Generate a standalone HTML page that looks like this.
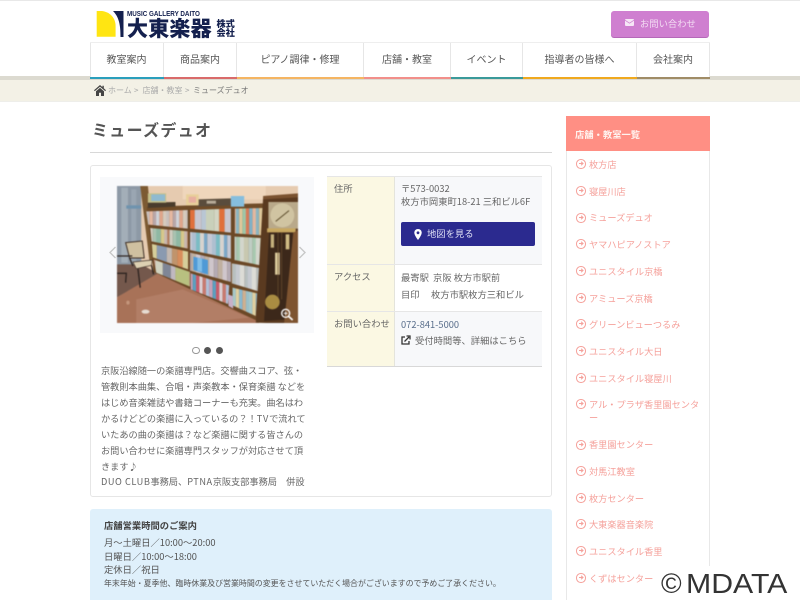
<!DOCTYPE html>
<html lang="ja"><head><meta charset="utf-8"><title>ミューズデュオ</title>
<style>
html,body{margin:0;padding:0;background:#fff}
#p{position:relative;width:800px;height:600px;overflow:hidden;background:#fff;font-family:"Noto Sans CJK JP","Liberation Sans",sans-serif;color:#555}
#p div{position:absolute}
.t{white-space:nowrap}
.nav{top:43px;height:34px;line-height:32px;text-align:center;font-size:10px;color:#555;background:#fff;border-right:1px solid #e6e6e6;box-sizing:border-box}
.st{top:77px;height:2px}
.line{left:101px;font-size:9.2px;line-height:16px;white-space:nowrap;color:#666}
.li{left:589px;font-size:9.2px;line-height:13px;white-space:nowrap;color:#f5a19b;margin-top:-.5px}
.ic{left:576px;width:7.5px;height:7.5px;border:1px solid #f5a19b;border-radius:50%}
.ic:after{content:"";position:absolute;left:1.5px;top:3.2px;width:4px;height:1px;background:#f5a19b}
.ic:before{content:"";position:absolute;left:2.8px;top:2.2px;width:2px;height:2px;border-top:1px solid #f5a19b;border-right:1px solid #f5a19b;transform:rotate(45deg)}
.v{font-size:9.3px;white-space:nowrap;color:#666;line-height:13px}
.l{left:334px;font-size:9.3px;white-space:nowrap;color:#666;line-height:13px}
.b{top:84px;font-size:8px;line-height:13px;color:#aaa;white-space:nowrap}
.w{letter-spacing:.55px}
</style></head><body><div id="p">
<div style="left:0;top:0;width:800px;height:1px;background:#e8e8e8"></div>

<!-- logo -->
<svg style="position:absolute;left:96px;top:10px" width="30" height="28" viewBox="0 0 30 28"><path d="M0.7 1H6C14 2 19.6 8 19.6 16V26.7H0.7Z" fill="#ffe512"/><path d="M17 1H27.5V27H24.5C24.600 15 23 7 17 1Z" fill="#14204e"/></svg>
<div class="t" style="left:127px;top:9.500px;font-family:'Liberation Sans',sans-serif;font-size:7.400px;font-weight:700;color:#14204e;line-height:8px;transform:scaleX(.85);transform-origin:0 50%">MUSIC GALLERY DAITO</div>
<div class="t" style="left:127px;top:16.500px;font-size:21px;font-weight:900;color:#14204e;line-height:23px;letter-spacing:.2px">大東楽器</div>
<div class="t" style="left:216.500px;top:18.500px;font-size:9.200px;font-weight:900;color:#14204e;line-height:9.500px">株式<br>会社</div>

<!-- contact button -->
<div style="left:611px;top:11px;width:98px;height:26px;background:#cf7fd0;border-radius:3px;box-shadow:0 1px 0 #b568b8"></div>
<svg style="position:absolute;left:625px;top:19px" width="9" height="7" viewBox="0 0 9 7"><rect width="9" height="7" rx="1" fill="#f6e6f6"/><path d="M0 1.200L4.500 4.200 9 1.200" stroke="#cf7fd0" stroke-width=".7" fill="none"/></svg>
<div class="t" style="left:640px;top:16.500px;font-size:9.300px;line-height:13px;color:#f3dcf3">お問い合わせ</div>

<!-- nav -->
<div style="left:0;top:76px;width:800px;height:4px;background:#dcdad0"></div>
<div style="left:90px;top:42px;width:620px;height:1px;background:#eee"></div>
<div style="left:90px;top:43px;width:1px;height:34px;background:#e6e6e6;z-index:2"></div>
<div class="nav" style="left:90px;width:74px">教室案内</div>
<div class="nav" style="left:164px;width:73px">商品案内</div>
<div class="nav" style="left:237px;width:127px">ピアノ調律・修理</div>
<div class="nav" style="left:364px;width:87px">店舗・教室</div>
<div class="nav" style="left:451px;width:72px">イベント</div>
<div class="nav" style="left:523px;width:114px">指導者の皆様へ</div>
<div class="nav" style="left:637px;width:73px">会社案内</div>
<div class="st" style="left:90px;width:74px;background:#2a9fbc"></div>
<div class="st" style="left:164px;width:73px;background:#d96a6a"></div>
<div class="st" style="left:237px;width:127px;background:#f5b562"></div>
<div class="st" style="left:364px;width:87px;background:#f28f8a"></div>
<div class="st" style="left:451px;width:72px;background:#3a9a9a"></div>
<div class="st" style="left:523px;width:114px;background:#f0a91e"></div>
<div class="st" style="left:637px;width:73px;background:#a08c66"></div>

<!-- breadcrumb -->
<div style="left:0;top:80px;width:800px;height:21px;background:#f3f1e6;border-bottom:1px solid #eeeeea"></div>
<svg style="position:absolute;left:94px;top:85px" width="12" height="11" viewBox="0 0 12 11"><path d="M6 0L0 5.200 .8 6.100 6 1.700 11.200 6.100 12 5.200 9.800 3.300V.8H8.400V2.100ZM2 6.300V11H5V7.800H7V11H10V6.300L6 2.900Z" fill="#444"/></svg>
<div class="b" style="left:108px">ホーム</div>
<div class="b" style="left:134px">&gt;</div>
<div class="b" style="left:142.500px">店舗・教室</div>
<div class="b" style="left:185px">&gt;</div>
<div class="b" style="left:193px;color:#777">ミューズデュオ</div>

<!-- title -->
<div class="t" style="left:92px;top:118px;font-size:16px;line-height:22px;font-weight:700;color:#555;letter-spacing:1.300px">ミューズデュオ</div>
<div style="left:90px;top:152px;width:462px;height:1px;background:#d8d8d8"></div>

<!-- card -->
<div style="left:90px;top:165px;width:460px;height:330px;border:1px solid #e6e6e6;border-radius:3px;background:#fff"></div>
<div style="left:100px;top:177px;width:214px;height:156px;background:#f8f9fb"></div>

<!-- photo -->
<svg style="position:absolute;left:116.700px;top:186px;filter:blur(.4px)" width="181.300" height="137" viewBox="2 0 546 411" preserveAspectRatio="none">
<defs>
<pattern id="a" width="60" height="10" patternUnits="userSpaceOnUse"><rect width="10" height="10" fill="#cfd2d8"/><rect x="10" width="10" height="10" fill="#e0a58a"/><rect x="20" width="10" height="10" fill="#d6cabc"/><rect x="30" width="10" height="10" fill="#c9c0bc"/><rect x="40" width="10" height="10" fill="#e7b8a0"/><rect x="50" width="10" height="10" fill="#b8a6a8"/></pattern>
<pattern id="b" width="90" height="10" patternUnits="userSpaceOnUse"><rect width="25" height="10" fill="#c9d0ba"/><rect x="25" width="15" height="10" fill="#d3d6c4"/><rect x="40" width="16" height="10" fill="#e0703c"/><rect x="56" width="20" height="10" fill="#c9c7d0"/><rect x="76" width="14" height="10" fill="#b9c6d4"/></pattern>
<pattern id="c" width="60" height="10" patternUnits="userSpaceOnUse"><rect width="10" height="10" fill="#8bb5c0"/><rect x="10" width="10" height="10" fill="#e0c89a"/><rect x="20" width="10" height="10" fill="#9ec7a8"/><rect x="30" width="10" height="10" fill="#d87a58"/><rect x="40" width="10" height="10" fill="#7fb2c8"/><rect x="50" width="10" height="10" fill="#e4b8a0"/></pattern>
<pattern id="d" width="60" height="10" patternUnits="userSpaceOnUse"><rect width="14" height="10" fill="#8fb8a4"/><rect x="14" width="10" height="10" fill="#d6c88a"/><rect x="24" width="10" height="10" fill="#c9b7ae"/><rect x="34" width="6" height="10" fill="#b47a5a"/><rect x="40" width="10" height="10" fill="#d0ccc0"/><rect x="50" width="10" height="10" fill="#a9c2b0"/></pattern>
<pattern id="e" width="60" height="10" patternUnits="userSpaceOnUse"><rect width="12" height="10" fill="#7cbcc4"/><rect x="12" width="12" height="10" fill="#d7d3ce"/><rect x="24" width="10" height="10" fill="#7ca8c8"/><rect x="34" width="14" height="10" fill="#c5c8d4"/><rect x="48" width="12" height="10" fill="#aebfd0"/></pattern>
<pattern id="f" width="48" height="10" patternUnits="userSpaceOnUse"><rect width="14" height="10" fill="#c8c8b0"/><rect x="14" width="12" height="10" fill="#bfcdc4"/><rect x="26" width="10" height="10" fill="#a8c9b0"/><rect x="36" width="12" height="10" fill="#d3d6cc"/></pattern>
<pattern id="g" width="100" height="10" patternUnits="userSpaceOnUse"><rect width="22" height="10" fill="#d6ce9a"/><rect x="22" width="30" height="10" fill="#8a9ab0"/><rect x="52" width="16" height="10" fill="#c3b8b0"/><rect x="68" width="16" height="10" fill="#c0946c"/><rect x="84" width="16" height="10" fill="#d88e5c"/></pattern>
<pattern id="h" width="40" height="10" patternUnits="userSpaceOnUse"><rect width="14" height="10" fill="#cfc6cc"/><rect x="14" width="12" height="10" fill="#b4aab4"/><rect x="26" width="14" height="10" fill="#c0b0a0"/></pattern>
<pattern id="i" width="36" height="10" patternUnits="userSpaceOnUse"><rect width="12" height="10" fill="#c6cad0"/><rect x="12" width="14" height="10" fill="#dcdcd6"/><rect x="26" width="10" height="10" fill="#b8c0c0"/></pattern>
<pattern id="j" width="118" height="10" patternUnits="userSpaceOnUse"><rect width="22" height="10" fill="#d0d2c0"/><rect x="22" width="24" height="10" fill="#7f8696"/><rect x="46" width="14" height="10" fill="#c0b8c0"/><rect x="60" width="42" height="10" fill="#b8c080"/><rect x="102" width="16" height="10" fill="#c8a090"/></pattern>
<pattern id="k" width="60" height="10" patternUnits="userSpaceOnUse"><rect width="10" height="10" fill="#c85a6a"/><rect x="10" width="10" height="10" fill="#dcd0d4"/><rect x="20" width="10" height="10" fill="#c87a70"/><rect x="30" width="10" height="10" fill="#b0c0d8"/><rect x="40" width="10" height="10" fill="#c7a0b8"/><rect x="50" width="10" height="10" fill="#5aa0c0"/></pattern>
<pattern id="l" width="50" height="10" patternUnits="userSpaceOnUse"><rect width="10" height="10" fill="#a8c8c8"/><rect x="10" width="10" height="10" fill="#e0d0a0"/><rect x="20" width="10" height="10" fill="#88b8d0"/><rect x="30" width="10" height="10" fill="#d0b090"/><rect x="40" width="10" height="10" fill="#9ac0c8"/></pattern>
</defs>
<rect x="0" y="0" width="552" height="414" fill="#e6cbb0"/>
<rect x="200" y="0" width="250" height="40" fill="#efd6bc"/>
<rect x="0" y="0" width="75" height="240" fill="#8d99a6"/>
<rect x="15" y="5" width="20" height="225" fill="#a3aeb8"/><rect x="45" y="10" width="15" height="220" fill="#9aa6b2"/><rect x="30" y="58" width="45" height="10" fill="#6f93ae"/>
<!-- floor -->
<polygon points="0,335 120,262 430,395 430,414 0,414" fill="#a87258"/>
<polygon points="60,340 200,310 400,395 200,414 60,414" fill="#b27e66"/>
<polygon points="0,235 75,235 125,262 0,335" fill="#74584c"/>
<!-- shelf body -->
<polygon points="72,0 95,0 118,225 100,225" fill="#7c5a32"/>
<polygon points="92,66 445,56 425,405 112,258" fill="#6b4826"/>
<polygon points="92,62 445,52 445,66 92,74" fill="#704c28"/>
<polygon points="95,50 178,48 178,62 95,66" fill="#4a3c2c"/>
<polygon points="245,40 345,37 345,58 245,62" fill="#5a4c3c"/><rect x="272" y="44" width="28" height="9" fill="#b7ab98"/>
<rect x="95" y="22" width="55" height="28" fill="#c4c08a"/><rect x="105" y="25" width="42" height="20" fill="#8fbad0"/>
<rect x="210" y="25" width="38" height="33" fill="#e8d09a"/><rect x="218" y="32" width="22" height="18" fill="#e8b0a0"/>
<rect x="345" y="30" width="40" height="32" fill="#86bede"/>
<!-- row 1 -->
<polygon points="90,76 215,72 215,128 96,116" fill="url(#a)"/>
<polygon points="222,72 345,68 345,140 222,128" fill="url(#b)"/>
<polygon points="357,68 442,66 440,148 357,142" fill="url(#c)"/>
<!-- row 2 -->
<polygon points="102,126 216,136 216,188 106,166" fill="url(#d)"/>
<polygon points="222,138 345,148 345,218 222,192" fill="url(#e)"/>
<polygon points="356,152 436,156 434,238 356,222" fill="url(#f)"/>
<!-- row 3 -->
<polygon points="107,174 216,197 216,250 110,214" fill="url(#g)"/>
<polygon points="222,200 345,228 345,288 222,254" fill="url(#h)"/>
<polygon points="232,212 276,222 276,266 232,252" fill="#4f9ad6"/>
<polygon points="244,215 258,218 258,258 244,254" fill="#7fbde6"/>
<polygon points="348,232 430,246 428,316 348,292" fill="url(#i)"/>
<!-- row 4 -->
<polygon points="113,221 222,258 222,302 120,260" fill="url(#j)"/>
<polygon points="224,262 340,298 336,354 224,310" fill="url(#k)"/>
<polygon points="350,305 424,322 420,390 350,358" fill="url(#l)"/>
<polygon points="336,325 350,330 352,368 338,360" fill="#c8b0c8"/>
<!-- clock -->
<polygon points="442,36 552,24 552,414 420,410" fill="#5a3a20"/>
<polygon points="442,30 548,22 548,34 442,40" fill="#7a5230"/>
<rect x="458" y="48" width="90" height="80" fill="#b9a98a"/>
<circle cx="500" cy="88" r="36" fill="#d0c4a2"/>
<path d="M480 106L520 74" stroke="#5a4a2a" stroke-width="3"/>
<rect x="454" y="127" width="86" height="12" fill="#c8a860"/>
<polygon points="460,140 532,140 520,400 445,405" fill="#3c281a"/>
<rect x="465" y="145" width="10" height="40" fill="#c4b07c"/><rect x="510" y="145" width="11" height="45" fill="#d0bc84"/>
<rect x="478" y="200" width="14" height="66" fill="#dccb9c"/>
<path d="M487 140V340M498 140V340" stroke="#6a5030" stroke-width="2"/>
<circle cx="470" cy="348" r="22" fill="#a98c42"/>
<polygon points="533,140 552,130 552,414 505,414" fill="#7e5430"/>
<!-- chair -->
<polygon points="28,170 78,165 84,216 40,216" fill="#cfc0a0" stroke="#3e2f26" stroke-width="3"/>
<polygon points="50,228 108,222 106,238 60,248" fill="#ddd0b2" stroke="#3e2f26" stroke-width="2"/>
<path d="M65 248L72 305M106 238L112 265M40 216L50 240M2 210H48M2 262H30L28 290" stroke="#2e2420" stroke-width="4" fill="none"/>
<ellipse cx="88" cy="377" rx="12" ry="6" fill="#e6dcd2"/>
<ellipse cx="35" cy="350" rx="5" ry="6" fill="#c4967c"/>
<!-- zoom icon -->
<circle cx="510" cy="382" r="12" fill="none" stroke="#fff" stroke-width="4"/><path d="M519 391L531 402" stroke="#fff" stroke-width="5"/><path d="M504 382H516M510 376V388" stroke="#fff" stroke-width="2.500"/>
</svg>
<svg style="position:absolute;left:109px;top:246px" width="8" height="13" viewBox="0 0 8 13"><path d="M6.500 1L1 6.500 6.500 12" fill="none" stroke="#c8c8c8" stroke-width="1.400"/></svg>
<svg style="position:absolute;left:298px;top:246px" width="8" height="13" viewBox="0 0 8 13"><path d="M1.500 1L7 6.500 1.500 12" fill="none" stroke="#c8c8c8" stroke-width="1.400"/></svg>
<div style="left:192px;top:346.500px;width:5.500px;height:5.500px;border:1px solid #999;border-radius:50%"></div>
<div style="left:204px;top:346.500px;width:7px;height:7px;background:#555;border-radius:50%"></div>
<div style="left:216px;top:346.500px;width:7px;height:7px;background:#555;border-radius:50%"></div>

<!-- description -->
<div class="line" style="top:361.500px">京阪沿線随一の楽譜専門店。交響曲スコア、弦・</div>
<div class="line" style="top:377.500px">管教則本曲集、合唱・声楽教本・保育楽譜 などを</div>
<div class="line" style="top:393.500px">はじめ音楽雑誌や書籍コーナーも充実。曲名はわ</div>
<div class="line" style="top:409.500px">かるけどどの楽譜に入っているの？！<span style="letter-spacing:.8px">TV</span>で流れて</div>
<div class="line" style="top:425.500px">いたあの曲の楽譜は？など楽譜に関する皆さんの</div>
<div class="line" style="top:441.500px">お問い合わせに楽譜専門スタッフが対応させて頂</div>
<div class="line" style="top:457.500px">きます♪</div>
<div class="line" style="top:473px"><span class="w">DUO CLUB</span>事務局、<span class="w">PTNA</span>京阪支部事務局　併設</div>

<!-- table -->
<div style="left:327px;top:176px;width:215px;height:191px;background:#fff;border-top:1px solid #e6e6e6;box-sizing:border-box"></div>
<div style="left:395px;top:177px;width:147px;height:87px;background:#f7f8fa"></div>
<div style="left:395px;top:311px;width:147px;height:56px;background:#f7f8fa"></div>
<div style="left:327px;top:177px;width:68px;height:190px;background:#fbf8e3;border-right:1px solid #e4e4dc;box-sizing:border-box"></div>
<div style="left:327px;top:264px;width:215px;height:1px;background:#e6e6e6"></div>
<div style="left:327px;top:310.500px;width:215px;height:1px;background:#e6e6e6"></div>
<div style="left:327px;top:366px;width:215px;height:1px;background:#d8d8d8"></div>
<div class="l" style="top:182px">住所</div>
<div class="l" style="top:270px">アクセス</div>
<div class="l" style="top:316.500px">お問い合わせ</div>
<div class="v" style="left:401px;top:182px">〒573-0032</div>
<div class="v" style="left:401px;top:195px">枚方市岡東町18-21 三和ビル6F</div>
<div style="left:401px;top:222px;width:134px;height:24px;background:#2b2a8f;border-radius:2px"></div>
<svg style="position:absolute;left:414px;top:229px" width="8" height="11" viewBox="0 0 8 11"><path d="M4 0C1.800 0 .3 1.700 .3 3.800 .3 6.400 4 11 4 11S7.700 6.400 7.700 3.800C7.700 1.700 6.200 0 4 0Z" fill="#fff"/><circle cx="4" cy="3.800" r="1.400" fill="#2b2a8f"/></svg>
<div class="t" style="left:427px;top:227px;font-size:9.300px;line-height:13px;color:#dfe0f5">地図を見る</div>
<div class="v" style="left:401px;top:270.500px">最寄駅&nbsp; 京阪 枚方市駅前</div>
<div class="v" style="left:401px;top:287.500px">目印　 枚方市駅枚方三和ビル</div>
<div class="v" style="left:401px;top:318px;color:#5a6f8c">072-841-5000</div>
<svg style="position:absolute;left:401px;top:335px" width="10" height="10" viewBox="0 0 10 10"><path d="M4 2H1V9H8V6" fill="none" stroke="#333" stroke-width="1.300"/><path d="M3.500 6.500L8 2M5.500 1H9V4.500" fill="none" stroke="#333" stroke-width="1.300"/></svg>
<div class="v" style="left:415px;top:334px">受付時間等、詳細はこちら</div>

<!-- hours -->
<div style="left:90px;top:509px;width:462px;height:100px;background:#dff0fb;border-radius:3px"></div>
<div class="t" style="left:104px;top:519px;font-size:9.300px;line-height:13px;font-weight:700;color:#444">店舗営業時間のご案内</div>
<div class="t" style="left:104px;top:536px;font-size:9.300px;line-height:13px;color:#555">月～土曜日／10:00～20:00</div>
<div class="t" style="left:104px;top:549.500px;font-size:9.300px;line-height:13px;color:#555">日曜日／10:00～18:00</div>
<div class="t" style="left:104px;top:562.500px;font-size:9.300px;line-height:13px;color:#555">定休日／祝日</div>
<div class="t" style="left:104px;top:578px;font-size:7.950px;line-height:12px;color:#555">年末年始・夏季他、臨時休業及び営業時間の変更をさせていただく場合がございますので予めご了承ください。</div>

<!-- sidebar -->
<div style="left:566px;top:116px;width:143.500px;height:494px;border:1px solid #e8e8e8;border-top:0;box-sizing:border-box;background:#fff"></div>
<div style="left:566px;top:116px;width:143.500px;height:35px;background:#ff8f84"></div>
<div class="t" style="left:575px;top:128px;font-size:9.300px;line-height:13px;font-weight:700;color:#fff3ef">店舗・教室一覧</div>

<div class="ic" style="top:159px"></div><div class="li" style="top:158px">枚方店</div>
<div class="ic" style="top:186px"></div><div class="li" style="top:185px">寝屋川店</div>
<div class="ic" style="top:213px"></div><div class="li" style="top:211px">ミューズデュオ</div>
<div class="ic" style="top:239px"></div><div class="li" style="top:238px">ヤマハピアノストア</div>
<div class="ic" style="top:266px"></div><div class="li" style="top:265px">ユニスタイル京橋</div>
<div class="ic" style="top:293px"></div><div class="li" style="top:292px">アミューズ京橋</div>
<div class="ic" style="top:319px"></div><div class="li" style="top:318px">グリーンビューつるみ</div>
<div class="ic" style="top:346px"></div><div class="li" style="top:345px">ユニスタイル大日</div>
<div class="ic" style="top:373px"></div><div class="li" style="top:372px">ユニスタイル寝屋川</div>
<div class="ic" style="top:399px"></div><div class="li" style="top:398px">アル・プラザ香里園センタ</div><div class="li" style="top:411px">ー</div>
<div class="ic" style="top:440px"></div><div class="li" style="top:438px">香里園センター</div>
<div class="ic" style="top:466px"></div><div class="li" style="top:465px">対馬江教室</div>
<div class="ic" style="top:493px"></div><div class="li" style="top:492px">枚方センター</div>
<div class="ic" style="top:519px"></div><div class="li" style="top:518px">大東楽器音楽院</div>
<div class="ic" style="top:546px"></div><div class="li" style="top:545px">ユニスタイル香里</div>
<div class="ic" style="top:573px"></div><div class="li" style="top:572px">くずはセンター</div>

<!-- watermark -->
<div style="left:657px;top:566px;width:143px;height:34px;background:#fff"></div>
<div class="t" style="left:661px;top:568px;font-family:'Liberation Sans',sans-serif;font-size:28px;line-height:32px;color:#333">©</div>
<div class="t" style="left:685.500px;top:568px;font-family:'Liberation Sans',sans-serif;font-size:28px;line-height:32px;color:#333;transform:scaleX(1.080);transform-origin:0 50%">MDATA</div>
</div></body></html>
